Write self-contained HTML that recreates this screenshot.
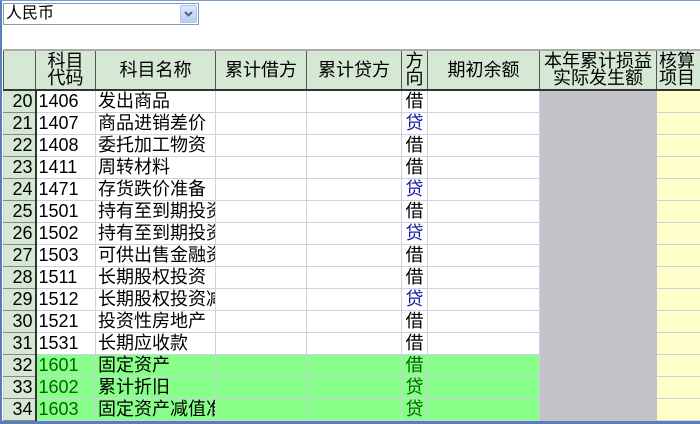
<!DOCTYPE html><html><head><meta charset="utf-8"><style>
body{margin:0;width:700px;height:424px;overflow:hidden;background:#fff;font-family:"Liberation Sans","Noto Sans CJK SC","WenQuanYi Zen Hei",sans-serif;position:relative}
.frame{position:absolute;left:0;top:0;width:700px;height:424px;box-sizing:border-box;border-left:2px solid #5a7fb8;border-top:1px solid #7a9ccc;border-bottom:3px solid #5a7fb8;z-index:2;pointer-events:none}
.combo{position:absolute;left:3px;top:3px;width:196px;height:22px;border:1px solid #7f9db9;box-sizing:border-box;font-size:16px;line-height:20px;padding-left:2px}
.btn{position:absolute;right:1px;top:1px;width:17px;height:18px;background:linear-gradient(#dce8fb,#b8cdf0);border:1px solid #b0c4e8;box-sizing:border-box;border-radius:2px}
table{position:absolute;left:3px;top:49px;width:697px;border-collapse:collapse;table-layout:fixed;font-size:18px}
td{border:1px solid #cfd0e0;height:21px;padding:0 2px;white-space:nowrap;overflow:hidden;line-height:21px}
tr.h td{background:#d4e8d4;border:1px solid #555;border-top:2px solid #aaa;border-bottom:2px solid #333;height:38px;text-align:center;line-height:17px;font-size:18px}
td.n{background:#d4e8d4;text-align:right;border-right:2px solid #333;border-bottom:1px solid #888}
td.g{background:#c3c2c8;border-color:#c3c2c8}
td.y{background:#ffffcc}
tr.gr td:not(.n):not(.g):not(.y){background:#88ff88}
tr.gr td.c{color:#060}
.b{color:#1a1aa0}
td.d{text-align:center;padding:0}
</style></head><body>
<div class="frame"></div>
<div class="combo">人民币<div class="btn"><svg width="15" height="16" viewBox="0 0 15 16"><path d="M4 6l3.5 3.5L11 6" stroke="#4d6185" stroke-width="2" fill="none"/></svg></div></div>
<table>
<tr class="h"><td style="width:27px"></td><td style="width:55px">科目<br>代码</td><td style="width:115px">科目名称</td><td style="width:86px">累计借方</td><td style="width:90px">累计贷方</td><td style="padding:0;width:25px">方<br>向</td><td style="width:107px">期初余额</td><td style="width:112px">本年累计损益<br>实际发生额</td><td style="text-align:left;width:47px">核算<br>项目</td></tr>
<tr><td class="n">20</td><td class="c">1406</td><td>发出商品</td><td></td><td></td><td class="d">借</td><td></td><td class="g"></td><td class="y"></td></tr>
<tr><td class="n">21</td><td class="c">1407</td><td>商品进销差价</td><td></td><td></td><td class="d b">贷</td><td></td><td class="g"></td><td class="y"></td></tr>
<tr><td class="n">22</td><td class="c">1408</td><td>委托加工物资</td><td></td><td></td><td class="d">借</td><td></td><td class="g"></td><td class="y"></td></tr>
<tr><td class="n">23</td><td class="c">1411</td><td>周转材料</td><td></td><td></td><td class="d">借</td><td></td><td class="g"></td><td class="y"></td></tr>
<tr><td class="n">24</td><td class="c">1471</td><td>存货跌价准备</td><td></td><td></td><td class="d b">贷</td><td></td><td class="g"></td><td class="y"></td></tr>
<tr><td class="n">25</td><td class="c">1501</td><td>持有至到期投资</td><td></td><td></td><td class="d">借</td><td></td><td class="g"></td><td class="y"></td></tr>
<tr><td class="n">26</td><td class="c">1502</td><td>持有至到期投资</td><td></td><td></td><td class="d b">贷</td><td></td><td class="g"></td><td class="y"></td></tr>
<tr><td class="n">27</td><td class="c">1503</td><td>可供出售金融资</td><td></td><td></td><td class="d">借</td><td></td><td class="g"></td><td class="y"></td></tr>
<tr><td class="n">28</td><td class="c">1511</td><td>长期股权投资</td><td></td><td></td><td class="d">借</td><td></td><td class="g"></td><td class="y"></td></tr>
<tr><td class="n">29</td><td class="c">1512</td><td>长期股权投资减</td><td></td><td></td><td class="d b">贷</td><td></td><td class="g"></td><td class="y"></td></tr>
<tr><td class="n">30</td><td class="c">1521</td><td>投资性房地产</td><td></td><td></td><td class="d">借</td><td></td><td class="g"></td><td class="y"></td></tr>
<tr><td class="n">31</td><td class="c">1531</td><td>长期应收款</td><td></td><td></td><td class="d">借</td><td></td><td class="g"></td><td class="y"></td></tr>
<tr class="gr"><td class="n">32</td><td class="c">1601</td><td>固定资产</td><td></td><td></td><td class="d c">借</td><td></td><td class="g"></td><td class="y"></td></tr>
<tr class="gr"><td class="n">33</td><td class="c">1602</td><td>累计折旧</td><td></td><td></td><td class="d c">贷</td><td></td><td class="g"></td><td class="y"></td></tr>
<tr class="gr"><td class="n">34</td><td class="c">1603</td><td>固定资产减值准</td><td></td><td></td><td class="d c">贷</td><td></td><td class="g"></td><td class="y"></td></tr>
</table>
</body></html>
